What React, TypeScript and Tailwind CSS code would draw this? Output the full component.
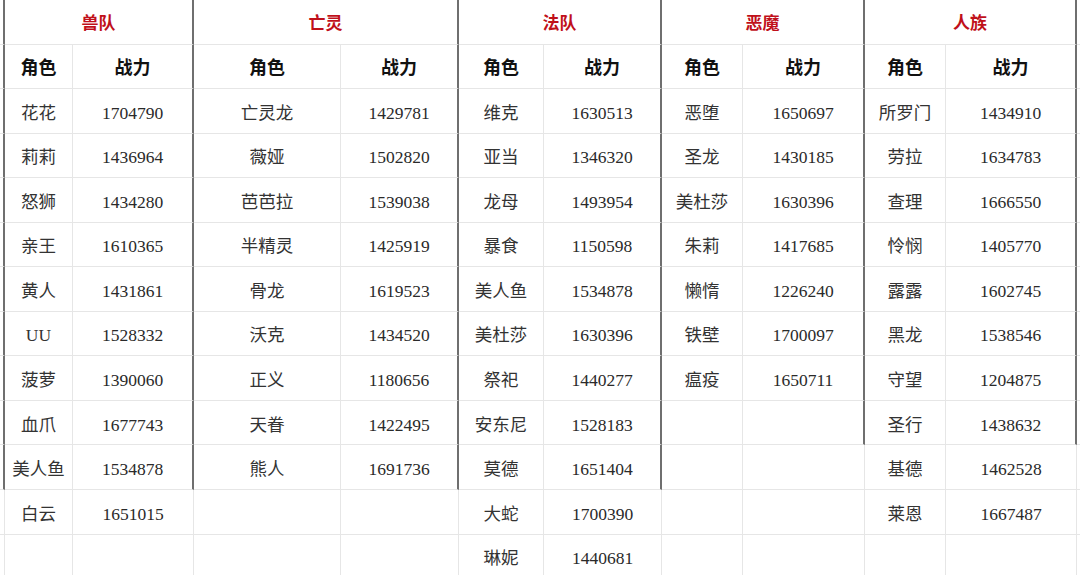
import React from 'react';

type Group = { title: string; rows: [string, string][]; boxRows: number };

const groups: Group[] = [
  {
    title: '兽队',
    boxRows: 11,
    rows: [
      ['花花', '1704790'],
      ['莉莉', '1436964'],
      ['怒狮', '1434280'],
      ['亲王', '1610365'],
      ['黄人', '1431861'],
      ['UU', '1528332'],
      ['菠萝', '1390060'],
      ['血爪', '1677743'],
      ['美人鱼', '1534878'],
      ['白云', '1651015'],
    ],
  },
  {
    title: '亡灵',
    boxRows: 11,
    rows: [
      ['亡灵龙', '1429781'],
      ['薇娅', '1502820'],
      ['芭芭拉', '1539038'],
      ['半精灵', '1425919'],
      ['骨龙', '1619523'],
      ['沃克', '1434520'],
      ['正义', '1180656'],
      ['天眷', '1422495'],
      ['熊人', '1691736'],
    ],
  },
  {
    title: '法队',
    boxRows: 11,
    rows: [
      ['维克', '1630513'],
      ['亚当', '1346320'],
      ['龙母', '1493954'],
      ['暴食', '1150598'],
      ['美人鱼', '1534878'],
      ['美杜莎', '1630396'],
      ['祭祀', '1440277'],
      ['安东尼', '1528183'],
      ['莫德', '1651404'],
      ['大蛇', '1700390'],
      ['琳妮', '1440681'],
    ],
  },
  {
    title: '恶魔',
    boxRows: 11,
    rows: [
      ['恶堕', '1650697'],
      ['圣龙', '1430185'],
      ['美杜莎', '1630396'],
      ['朱莉', '1417685'],
      ['懒惰', '1226240'],
      ['铁壁', '1700097'],
      ['瘟疫', '1650711'],
    ],
  },
  {
    title: '人族',
    boxRows: 10,
    rows: [
      ['所罗门', '1434910'],
      ['劳拉', '1634783'],
      ['查理', '1666550'],
      ['怜悯', '1405770'],
      ['露露', '1602745'],
      ['黑龙', '1538546'],
      ['守望', '1204875'],
      ['圣行', '1438632'],
      ['基德', '1462528'],
      ['莱恩', '1667487'],
    ],
  },
];

const TOTAL_ROWS = 13;
const DARK = 'border-r-2 border-r-[#6f6f6f]';
const LIGHT = 'border-r border-r-[#e6e6e6]';
const cell = 'flex items-center justify-center pt-[4px] border-b border-b-[#e6e6e6]';

const App: React.FC = () => {
  const cells: React.ReactNode[] = [];

  // row 0: group titles
  cells.push(<div key="h-s" className={`${cell} ${DARK}`} />);
  groups.forEach((g, gi) => {
    cells.push(
      <div key={`h-${gi}`} className={`${cell} ${DARK} col-span-2 text-[17px] font-bold text-[#c0101a]`}>
        {g.title}
      </div>
    );
  });
  cells.push(<div key="h-e" className={cell} />);

  for (let r = 1; r < TOTAL_ROWS; r++) {
    const leftDark = r < groups[0].boxRows;
    cells.push(<div key={`s-${r}`} className={`${cell} ${leftDark ? DARK : LIGHT}`} />);
    groups.forEach((g, gi) => {
      const next = groups[gi + 1];
      const rightDark = next ? r < next.boxRows : r < g.boxRows;
      const data = r === 1 ? null : g.rows[r - 2];
      if (r === 1) {
        cells.push(
          <div key={`a-${r}-${gi}`} className={`${cell} ${LIGHT} text-[18px] font-bold text-[#111]`}>
            角色
          </div>,
          <div
            key={`b-${r}-${gi}`}
            className={`${cell} ${rightDark ? DARK : LIGHT} text-[18px] font-bold text-[#111]`}
          >
            战力
          </div>
        );
      } else {
        cells.push(
          <div key={`a-${r}-${gi}`} className={`${cell} ${LIGHT} text-[17.5px] text-[#333]`}>
            {data ? data[0] : ''}
          </div>,
          <div
            key={`b-${r}-${gi}`}
            className={`${cell} ${rightDark ? DARK : LIGHT} text-[17.5px] text-[#2a2a2a]`}
          >
            {data ? data[1] : ''}
          </div>
        );
      }
    });
    cells.push(<div key={`e-${r}`} className={cell} />);
  }

  return (
    <div
      className="w-[1080px] h-[575px] overflow-hidden bg-white"
      style={{ fontFamily: '"Liberation Serif", "Noto Sans CJK SC", serif' }}
    >
      <div className="grid grid-cols-[5px_68px_121px_147px_118px_85px_118px_81px_122px_81px_131px_3px] auto-rows-[44.55px]">
        {cells}
      </div>
    </div>
  );
};

export default App;
